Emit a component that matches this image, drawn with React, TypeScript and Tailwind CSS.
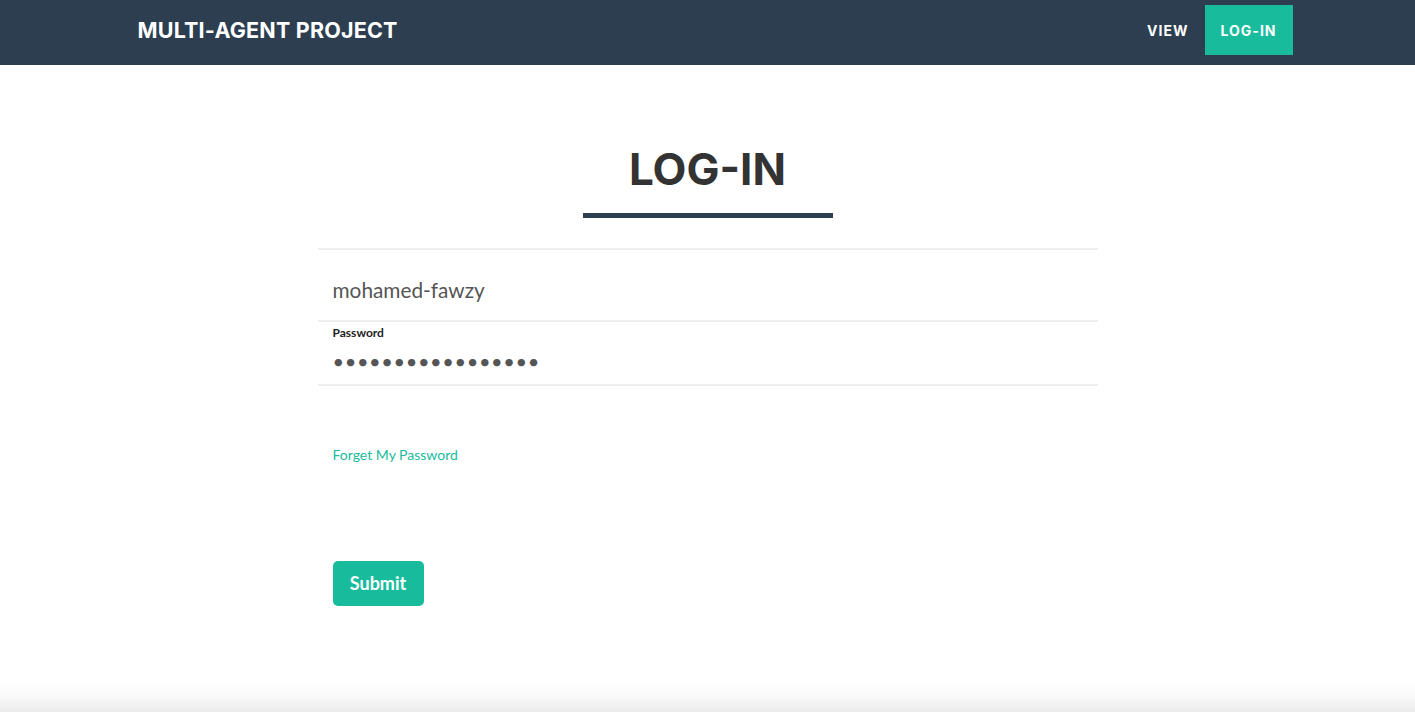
export default function App() {
  return (
    <div className="min-h-screen overflow-hidden bg-white" style={{ fontFamily: "Lato, 'Liberation Sans', sans-serif" }}>
      {/* Navbar */}
      <nav className="h-[65px] bg-[#2c3e50]">
        <div className="mx-auto flex h-full w-[1170px] items-start justify-between pl-[15px]">
          <a href="#" className="mt-[17px] font-['Inter',sans-serif] text-[21.5px] font-bold leading-[26px] tracking-[0.2px] text-white">
            MULTI-AGENT PROJECT
          </a>
          <ul className="mt-[5px] flex items-center font-['Inter',sans-serif] text-[14px] font-bold tracking-[1px] text-white">
            <li className="px-4">VIEW</li>
            <li className="flex h-[50px] items-center bg-[#18bc9c] px-4">LOG-IN</li>
          </ul>
        </div>
      </nav>

      {/* Heading */}
      <section className="flex flex-col items-center pt-[80px]">
        <h2 className="font-['Inter',sans-serif] text-[44px] font-bold leading-[1.1] text-[#333]">
          LOG-IN
        </h2>
        <hr className="mt-[20px] h-[5px] w-[250px] border-0 bg-[#2c3e50]" />
      </section>

      {/* Form */}
      <form className="mx-auto mt-[30px] w-[780px]">
        <div className="border-y-2 border-[#eee] px-[15px] pt-[24px] pb-[16px]">
          <input
            type="text"
            defaultValue="mohamed-fawzy"
            className="h-[30px] w-full bg-transparent text-[20.8px] text-[#555] outline-none"
          />
        </div>
        <div className="border-b-2 border-[#eee] px-[15px] pt-[2px] pb-[8px]">
          <label className="block text-[12px] font-bold text-[#222]">Password</label>
          <input
            type="password"
            defaultValue="mohamedfawzy12345"
            className="mt-[4px] w-full bg-transparent text-[20px] tracking-[0.6px] text-[#555] outline-none"
          />
        </div>

        <div className="px-[15px] pt-[56px]">
          <a href="#" className="text-[14px] text-[#18bc9c]">
            Forget My Password
          </a>
        </div>

        <div className="px-[15px] pt-[95px]">
          <button
            type="submit"
            className="h-[45px] w-[91px] rounded-[5px] bg-[#18bc9c] text-[18px] font-bold text-white"
          >
            Submit
          </button>
        </div>
      </form>

      {/* shadow of the section below */}
      <div className="mt-[74px] h-[32px] bg-gradient-to-b from-white via-[#fafafa] to-[#ebebeb]" />
    </div>
  );
}
